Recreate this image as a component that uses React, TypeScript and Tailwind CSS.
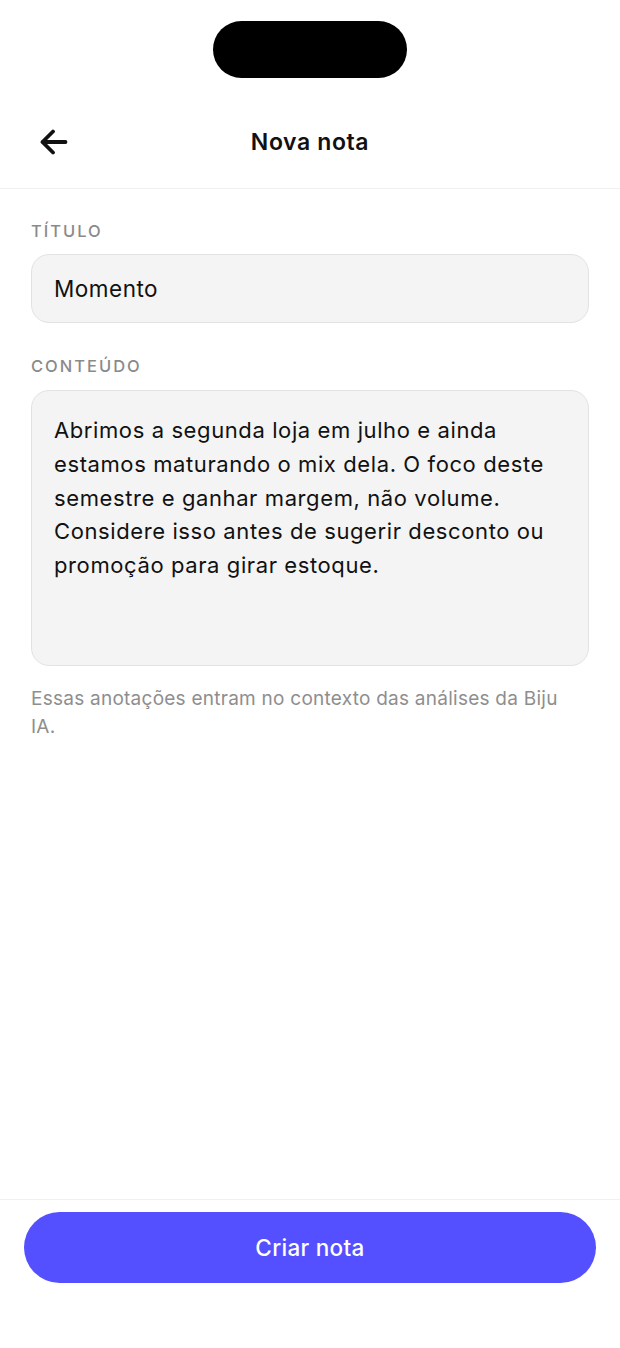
import {useState} from 'react';

const contentText =
	'Abrimos a segunda loja em julho e ainda estamos maturando o mix dela. O foco deste semestre e ganhar margem, não volume. Considere isso antes de sugerir desconto ou promoção para girar estoque.';

function BackArrow() {
	return (
		<svg width="28" height="26" viewBox="0 0 28 26" fill="none" stroke="#111111" strokeWidth="3.8" strokeLinecap="round" strokeLinejoin="round">
			<path d="M13 2.5 2.5 13 13 23.5" />
			<path d="M3 13h22.5" />
		</svg>
	);
}

export default function App() {
	const [title, setTitle] = useState('Momento');
	const [content, setContent] = useState(contentText);

	return (
		<div className="min-h-[1348px] flex flex-col bg-white text-[#111111]" style={{fontFamily: 'Inter, "Noto Sans", sans-serif'}}>
			<div className="h-[96px] flex justify-center pt-[21px]">
				<div className="w-[194px] h-[57px] rounded-full bg-black" />
			</div>

			<header className="h-[93px] relative flex items-center justify-center border-b border-[#f0f0f0]">
				<button type="button" className="absolute left-[40px] top-[33px]">
					<BackArrow />
				</button>
				<h1 className="text-[23px] font-semibold tracking-[0.6px]">Nova nota</h1>
			</header>

			<main className="flex-1 px-[31px] pt-[32px]">
				<label className="block text-[16.5px] leading-[20px] font-medium tracking-[2px] text-[#8a8a8a] uppercase mb-[13px]">Título</label>
				<input
					className="w-full h-[69px] rounded-[18px] bg-[#f4f4f4] border border-[#e2e2e2] px-[22px] text-[22.5px] tracking-[0.5px] text-[#111111] outline-none"
					value={title}
					onChange={e => {
						setTitle(e.target.value);
					}}
				/>

				<label className="block mt-[33px] text-[16.5px] leading-[20px] font-medium tracking-[2px] text-[#8a8a8a] uppercase mb-[14px]">Conteúdo</label>
				<textarea
					className="block w-full h-[276px] resize-none rounded-[18px] bg-[#f4f4f4] border border-[#e2e2e2] px-[22px] pt-[23px] text-[22px] tracking-[0.6px] leading-[33.75px] text-[#111111] outline-none"
					value={content}
					onChange={e => {
						setContent(e.target.value);
					}}
				/>

				<p className="mt-[19px] pr-[12px] text-[19px] tracking-[0.25px] leading-[28px] text-[#8e8e8e]">
					Essas anotações entram no contexto das análises da Biju IA.
				</p>
			</main>

			<footer className="border-t border-[#f0f0f0] pt-[12px] pb-[65px] px-[24px]">
				<button type="button" className="w-full h-[71px] rounded-full bg-[#5450ff] text-white text-[22.5px] tracking-[0.3px] font-medium">
					Criar nota
				</button>
			</footer>
		</div>
	);
}
